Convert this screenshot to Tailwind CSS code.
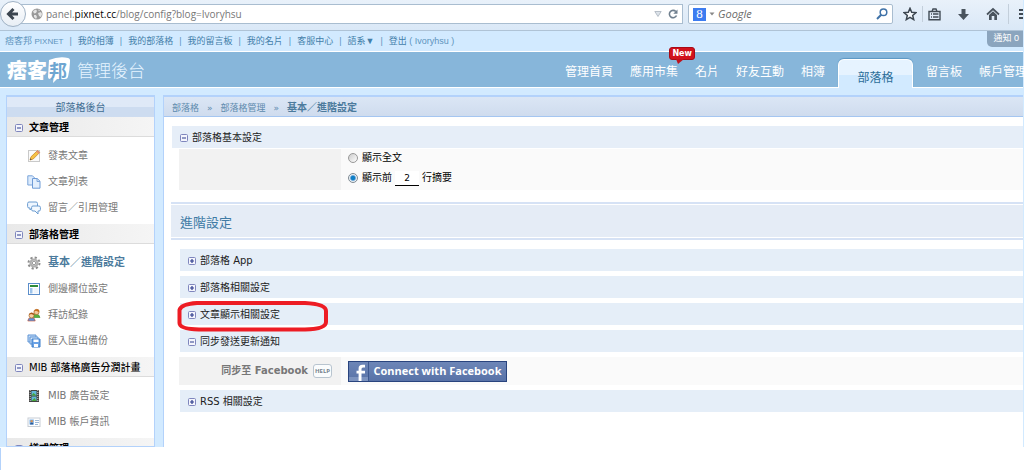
<!DOCTYPE html>
<html lang="zh-Hant">
<head>
<meta charset="utf-8">
<title>部落格管理 - 基本／進階設定</title>
<script src="https://cdn.jsdelivr.net/npm/@tailwindcss/browser@4"></script>
</head>
<body class="bg-white font-['DejaVu_Sans','Noto_Sans_CJK_TC',sans-serif] text-[10px] leading-4 text-[#222]">
<svg class="hidden">
  <symbol id="minus" viewBox="0 0 8 8"><rect x=".5" y=".5" width="7" height="7" rx="1" fill="#f4f5fc" stroke="#7f86bd"/><path d="M2 4h4" stroke="#2c3c8c"/></symbol>
  <symbol id="plus" viewBox="0 0 8 8"><rect x=".5" y=".5" width="7" height="7" rx="1" fill="#f4f5fc" stroke="#7f86bd"/><path d="M2 4h4M4 2v4" stroke="#2c3c8c" stroke-width="1.200"/></symbol>
</svg>
<div class="flex h-[calc(100vh-23px)] flex-col overflow-hidden bg-[#d2eaff] pr-px">

  <!-- Browser toolbar -->
  <div class="flex h-[31px] shrink-0 items-start border-b border-[#afc3d6] bg-linear-to-b from-[#e9f1fa] to-[#dae8f7] pt-1">
    <button aria-label="上一頁" class="relative z-10 -mt-[3px] h-[26px] w-[26px] shrink-0 rounded-full border border-[#9fb1c4] bg-linear-to-b from-white to-[#e8eef5]">
      <svg class="mx-auto h-4 w-4" viewBox="0 0 16 16"><path d="M8.500 3L3.500 8l5 5M4 8h9" fill="none" stroke="#3c4650" stroke-width="3"/></svg>
    </button>
    <div class="-ml-3 flex h-5 min-w-0 flex-1 items-center border border-[#a9bdd0] bg-white pr-1 pl-4">
      <svg class="h-3 w-3 shrink-0" viewBox="0 0 12 12"><circle cx="6" cy="6" r="5.500" fill="#999"/><path d="M2 3l3-1.500 1 1.500-1 2-2 .5zM7 5l3-1 1 2-1 3-2-1zM3 7l2 0 1 2-1 2-2-2zM7 1.500l2 .7-1 1z" fill="#e4e4e4"/></svg>
      <div class="relative ml-[3px] h-[18px] min-w-0 flex-1 font-['Open_Sans',sans-serif] text-[10px] leading-[18px] text-[#777]">
        <input aria-label="網址" class="absolute inset-0 w-full bg-transparent text-transparent outline-none">
        <span>panel.<span class="text-black">pixnet.cc</span>/blog/config?blog=Ivoryhsu</span>
      </div>
      <svg class="h-2 w-2 shrink-0" viewBox="0 0 8 8"><path d="M.8 1.500h6.400L4 6.500z" fill="#dde3ea" stroke="#a8b2bd" stroke-width=".8"/></svg>
      <button aria-label="重新載入" class="ml-1.5"><svg class="h-[10px] w-[10px]" viewBox="0 0 10 10"><path d="M7.800 2.500A3.700 3.700 0 1 0 8.500 6.500" fill="none" stroke="#6f7f8e" stroke-width="1.600"/><path d="M9.500.5v4.200H5.300z" fill="#6f7f8e"/></svg></button>
    </div>
    <div class="ml-[5px] flex h-5 w-[205px] shrink-0 items-center rounded-[2px] border border-[#a9bdd0] bg-white px-1">
      <span class="flex h-[13px] w-[13px] items-center justify-center bg-[#3d7cf0] font-['Liberation_Serif',serif] text-[13px] text-white">8</span>
      <svg class="ml-[3px] h-1 w-[6px]" viewBox="0 0 6 4"><path d="M.5.5h5L3 3.500z" fill="#888"/></svg>
      <input aria-label="搜尋" placeholder="Google" class="ml-[3px] min-w-0 flex-1 bg-transparent font-['Open_Sans',sans-serif] text-[11px] italic outline-none placeholder:text-[#6b6b6b]">
      <button aria-label="搜尋"><svg class="h-3 w-3" viewBox="0 0 12 12"><circle cx="7.500" cy="4.300" r="3.300" fill="none" stroke="#3f72a8" stroke-width="1.500"/><path d="M5.200 6.800L1 11" stroke="#3f72a8" stroke-width="2"/></svg></button>
    </div>
    <div class="flex h-5 shrink-0 items-center pl-[10px]">
      <button aria-label="書籤"><svg class="h-[14px] w-[14px]" viewBox="0 0 14 14"><path d="M7 1.300l1.700 3.900 4.200.4-3.200 2.800 1 4.200L7 10.400l-3.700 2.200 1-4.200L1.100 5.600l4.200-.4z" fill="#f4f8fc" stroke="#3c4650" stroke-width="1.500"/></svg></button>
      <span class="mr-[5px] ml-[5px] h-4 w-px bg-[#c3cfdb]"></span>
      <button aria-label="書籤清單"><svg class="h-[13px] w-[13px]" viewBox="0 0 13 13"><path d="M1 3.500h11v8.300H1zM4 3.500L5 1h3l1 2.500M3 6h1M5 6h5.500M3 9h1M5 9h5.500" fill="none" stroke="#414b55" stroke-width="1.400"/></svg></button>
      <button aria-label="下載" class="ml-4"><svg class="h-[13px] w-[13px]" viewBox="0 0 13 13"><path d="M4.500 1h4v5H12L6.500 12 1 6h3.500z" fill="#4a545e"/></svg></button>
      <button aria-label="首頁" class="ml-4"><svg class="h-[14px] w-[14px]" viewBox="0 0 14 14"><path d="M1 7.500L7 2l6 5.500" fill="none" stroke="#4a545e" stroke-width="1.700"/><path d="M3 8l4-3.700L11 8v5H8.300V9H5.700v4H3z" fill="#4a545e"/></svg></button>
      <span class="ml-2 h-5 w-px bg-[#c3cfdb]"></span>
      <button aria-label="選單" class="ml-2.5 w-1 overflow-hidden"><svg class="h-3 w-3" viewBox="0 0 12 12"><path d="M0 2h12M0 6h12M0 10h12" stroke="#414b55" stroke-width="2"/></svg></button>
    </div>
  </div>

  <!-- Account links -->
  <div class="flex h-[20px] shrink-0 items-start justify-between">
    <nav class="flex gap-[6px] pt-0.5 pl-[5px] font-['Liberation_Sans','Noto_Sans_CJK_TC',sans-serif] text-[9px] whitespace-nowrap text-[#5d94bd]">
      <a href="#">痞客邦 <span class="text-[8px]">PIXNET</span></a><span>|</span><a href="#" class="text-[#4480aa]">我的相簿</a><span>|</span><a href="#" class="text-[#4480aa]">我的部落格</a><span>|</span><a href="#" class="text-[#4480aa]">我的留言板</a><span>|</span><a href="#" class="text-[#4480aa]">我的名片</a><span>|</span><a href="#" class="text-[#4480aa]">客服中心</a><span>|</span><a href="#" class="text-[#4480aa]">語系▼</a><span>|</span><a href="#"><span class="text-[#4480aa]">登出</span> ( Ivoryhsu )</a>
    </nav>
    <a href="#" class="h-4 rounded-bl-[5px] bg-[#8ba5be] pr-1 pl-1.5 font-['Liberation_Sans','Noto_Sans_CJK_TC',sans-serif] text-[9px] leading-[15px] text-white">通知 0</a>
  </div>

  <!-- Site header -->
  <header class="flex h-[37px] shrink-0 items-stretch border-y border-white bg-[#87b6da] pl-[7px]">
    <a href="#" class="flex items-center" aria-label="痞客邦管理後台">
      <span class="flex items-center font-['Noto_Sans_CJK_TC',sans-serif] text-[20px] leading-[26px] font-black text-white">痞客<span class="relative w-[24px] pl-0.5 text-[18px] font-bold text-[#6ea6d1]"><svg class="absolute -top-px left-0 h-7 w-6" viewBox="0 0 24 28"><path d="M2 4Q12 0 21 2q2.500.5 2 4-.3 8-2 15-.5 2-3 2h-8l-4 4 .5-4H3q-2 0-2-2z" fill="#fff"/></svg><span class="relative">邦</span></span></span>
      <span class="ml-[6px] font-['Noto_Sans_CJK_TC',sans-serif] text-[17px] leading-6 font-light text-[#e6f4ff]">管理後台</span>
    </a>
    <nav class="-mr-1 ml-auto flex gap-px font-['Noto_Sans_CJK_TC',sans-serif] text-[12px] leading-[38px] whitespace-nowrap text-white">
      <a href="#" class="px-2">管理首頁</a>
      <a href="#" class="relative px-2">應用市集<span class="absolute -top-[5px] right-0 -mr-[9px] h-[13px] rounded-[3px] border border-[#a80a16] bg-[#d1121d] px-0.5 font-['DejaVu_Sans',sans-serif] text-[8px] leading-[11px] font-bold">New<svg class="absolute top-[11px] left-1.5 h-1.5 w-2" viewBox="0 0 8 6"><path d="M0 0h8L2 5z" fill="#c0101a"/></svg></span></a>
      <a href="#" class="px-2">名片</a>
      <a href="#" class="px-2">好友互動</a>
      <a href="#" class="px-2">相簿</a>
      <a href="#" aria-current="page" class="mt-[7px] ml-1 -mb-px w-[75px] rounded-t-md border border-b-0 border-white bg-linear-to-b from-[#e6f3ff] from-55% to-[#d2eaff] to-55% text-center leading-[34px] text-[#2c6e98] shadow-[0_-1px_1px_#5d97c4]">部落格</a>
      <a href="#" class="ml-1 px-2">留言板</a>
      <a href="#" class="pl-2">帳戶管理</a>
    </nav>
  </header>

  <div class="flex min-h-0 flex-1 gap-2 pt-[7px] pl-[6px]">

    <!-- Sidebar -->
    <aside class="w-[149px] shrink-0 overflow-hidden border border-t-2 border-[#b3d2fb] bg-white">
      <h2 class="h-5 bg-linear-to-b from-[#dfe9f7] from-50% to-[#cddcf0] to-50% text-center leading-[22px] text-[#3f6d92]">部落格後台</h2>
      <section>
        <h3><button class="flex h-5 w-full items-center gap-1.5 border-b border-[#dcdcdc] bg-linear-to-r from-[#e9e9e9] to-[#f5f5f5] pt-0.5 pl-2 font-bold text-black"><svg class="h-2 w-2"><use href="#minus"/></svg><span>文章管理</span></button></h3>
        <ul class="pt-[6px] pb-[3px] pl-5 text-[#777]">
          <li><a href="#" class="flex h-[26px] items-center gap-[7px]"><svg class="h-[14px] w-[14px]" viewBox="0 0 14 14"><rect x="1.500" y="1.500" width="11" height="11" fill="#fafafa" stroke="#c9c9c9"/><path d="M3 11l1-3.200L10.500 1.500l2.200 2L6.200 10z" fill="#f6c244" stroke="#c98a2a" stroke-width=".8"/><path d="M10.500 1.500l2.200 2-1.200 1.200-2.200-2z" fill="#e58c7d"/><path d="M3 11l.5-1.700 1.200 1.200z" fill="#444"/></svg>發表文章</a></li>
          <li><a href="#" class="flex h-[26px] items-center gap-[7px]"><svg class="h-[14px] w-[14px]" viewBox="0 0 14 14"><path d="M.8.8h4.700l2.200 2.200v7H.8z" fill="#dcebfd" stroke="#7ba4d9"/><path d="M5.500 3.500h4.700l2.800 2.700v7H5.500z" fill="#e3effd" stroke="#6f9bd6"/><path d="M10 3.500v3h3" stroke="#7ba4d9" fill="none"/></svg>文章列表</a></li>
          <li><a href="#" class="flex h-[26px] items-center gap-[7px]"><svg class="h-[14px] w-[14px]" viewBox="0 0 14 14"><path d="M2 1h7q1.500 0 1.500 1.500v3Q10.500 7 9 7H5L3 9V7H2Q.6 7 .6 5.500v-3Q.6 1 2 1z" fill="#eef6ff" stroke="#6b9cd0"/><path d="M6 5h6q1.400 0 1.400 1.400v2.200Q13.400 10 12 10h-1v3l-3-3H6q-1.400 0-1.400-1.400V6.400Q4.600 5 6 5z" fill="#f3f9ff" stroke="#6b9cd0"/></svg>留言／引用管理</a></li>
        </ul>
      </section>
      <section>
        <h3><button class="flex h-5 w-full items-center gap-1.5 border-b border-[#dcdcdc] bg-linear-to-r from-[#e9e9e9] to-[#f5f5f5] pt-0.5 pl-2 font-bold text-black"><svg class="h-2 w-2"><use href="#minus"/></svg><span>部落格管理</span></button></h3>
        <ul class="pt-[6px] pb-[3px] pl-5 text-[#777]">
          <li><a href="#" aria-current="page" class="flex h-[26px] items-center gap-[7px] text-[11px] font-bold text-[#4c7b9d]"><svg class="h-[14px] w-[14px]" viewBox="0 0 14 14"><circle cx="7" cy="7" r="5.500" fill="none" stroke="#8d8d8d" stroke-width="2" stroke-dasharray="2.200 2.120"/><circle cx="7" cy="7" r="3.500" fill="#ddd" stroke="#b0b0b0" stroke-width="2.200"/><circle cx="7" cy="7" r="1.700" fill="#fff" stroke="#888" stroke-width=".8"/></svg>基本／進階設定</a></li>
          <li><a href="#" class="flex h-[26px] items-center gap-[7px]"><svg class="h-[14px] w-[14px]" viewBox="0 0 14 14"><rect x="1.500" y="1.500" width="11" height="11" fill="#fff" stroke="#5b8ecb"/><path d="M3 4h8" stroke="#2f8c39" stroke-width="2"/><path d="M3 6h2.500v5.500H3z" fill="#9dc3ea"/><path d="M6.500 6h5v5.500h-5z" fill="#edf4fc"/></svg>側邊欄位設定</a></li>
          <li><a href="#" class="flex h-[26px] items-center gap-[7px]"><svg class="h-[14px] w-[14px]" viewBox="0 0 14 14"><path d="M5.500 9q.3-3 3.500-3t4 3.500H6z" fill="#55b03e" stroke="#388a2a" stroke-width=".6"/><circle cx="9.500" cy="4" r="2.600" fill="#f4c89a" stroke="#a8641f" stroke-width=".7"/><path d="M7 3.500Q8 .8 10.500 1.300T12 4L9 2.800z" fill="#c56b1c"/><path d="M.8 13q0-3.500 3.700-3.500T8.200 13z" fill="#5b93dd" stroke="#d2542d" stroke-width=".6"/><circle cx="4.500" cy="7.500" r="2.500" fill="#f7cfa5" stroke="#a8641f" stroke-width=".7"/><path d="M2 7Q2.300 4.600 4.800 4.700T7 7L4 6z" fill="#a9561a"/></svg>拜訪紀錄</a></li>
          <li><a href="#" class="flex h-[26px] items-center gap-[7px]"><svg class="h-[14px] w-[14px]" viewBox="0 0 14 14"><path d="M1 1h8v7H1z" fill="#c4dcf8" stroke="#5e94d4"/><path d="M3 3h8v7H3z" fill="#d7e8fb" stroke="#5e94d4"/><path d="M5 5h8v8H5z" fill="#6ba3e6" stroke="#3f80cb"/><path d="M6.500 5.500h5V8h-5zM7 10h4v3H7z" fill="#fff"/></svg>匯入匯出備份</a></li>
        </ul>
      </section>
      <section>
        <h3><button class="flex h-5 w-full items-center gap-1.5 border-b border-[#dcdcdc] bg-linear-to-r from-[#e9e9e9] to-[#f5f5f5] pt-0.5 pl-2 font-medium whitespace-nowrap text-black"><svg class="h-2 w-2"><use href="#minus"/></svg><span>MIB 部落格廣告分潤計畫</span></button></h3>
        <ul class="pt-[6px] pb-[3px] pl-5 text-[#777]">
          <li><a href="#" class="flex h-[26px] items-center gap-[7px]"><svg class="h-[14px] w-[14px]" viewBox="0 0 14 14"><path d="M2 1h10v12H2z" fill="#444"/><path d="M4.500 2h5v4.500h-5zM4.500 7.500h5V12h-5z" fill="#61b7d8"/><path d="M4.500 6.500l2-2.500 3 2.500zM4.500 12l3-3 2 3z" fill="#48a637"/><path d="M3.200 1v12M10.800 1v12" stroke="#ddd" stroke-width=".9" stroke-dasharray="1 1"/></svg>MIB 廣告設定</a></li>
          <li><a href="#" class="flex h-[26px] items-center gap-[7px]"><svg class="h-[14px] w-[14px]" viewBox="0 0 14 14"><rect x="1" y="3" width="12" height="8.500" fill="#fff" stroke="#c8ced6"/><path d="M2.500 4.500h4.300V9.500H2.500z" fill="#77aee6"/><circle cx="4.700" cy="6.300" r="1.200" fill="#d39258"/><path d="M3 9.500q0-2 1.700-2t1.700 2z" fill="#2c5d9c"/><path d="M8 5.500h4M8 7.500h4M8 9.500h3" stroke="#9db9d8"/></svg>MIB 帳戶資訊</a></li>
        </ul>
      </section>
      <section>
        <h3><button class="flex h-5 w-full items-center gap-1.5 border-b border-[#dcdcdc] bg-linear-to-r from-[#e9e9e9] to-[#f5f5f5] pt-0.5 pl-2 font-bold text-black"><svg class="h-2 w-2"><use href="#minus"/></svg><span>樣式管理</span></button></h3>
      </section>
    </aside>

    <!-- Settings -->
    <main class="min-w-0 flex-1 border-t-2 border-l border-[#b3d2fb] bg-white">
      <nav aria-label="路徑" class="flex h-5 items-center gap-2 border-b border-[#a5c6f1] bg-linear-to-b from-[#dbe6f5] to-[#cfdcee] pt-0.5 pl-2 text-[9px] text-[#5d8aad]">
        <a href="#">部落格</a><span>»</span><a href="#">部落格管理</a><span>»</span><strong class="text-[10px] text-[#4c7b9d]">基本／進階設定</strong>
      </nav>

      <section class="pt-[9px] pl-2">
        <h2><button class="flex h-[22px] w-full items-center gap-1 bg-[#e6eef8] pt-0.5 pl-2"><svg class="h-2 w-2"><use href="#minus"/></svg>部落格基本設定</button></h2>
        <div class="mt-px ml-[7px] flex">
          <div class="w-[162px] shrink-0 bg-[#f2f2f2]"></div>
          <div class="flex-1 bg-[#fafafa] pl-[7px] text-black">
            <label class="flex h-[17px] items-center gap-1"><input type="radio" name="show" class="h-[10px] w-[10px] appearance-none rounded-full border border-[#999] bg-linear-to-br from-[#ccc] to-white">顯示全文</label>
            <div class="flex h-6 items-center">
              <input type="radio" id="summary" name="show" checked class="h-[10px] w-[10px] appearance-none rounded-full border border-[#7f8a93] bg-radial from-[#0f7fc6] from-35% to-[#e8f0f5] to-60%">
              <label for="summary" class="ml-1">顯示前</label>
              <input aria-label="行數" value="2" class="mx-[3px] h-[15px] w-6 border-b border-black bg-white text-center text-[9px] outline-none">
              <span>行摘要</span>
            </div>
          </div>
        </div>
      </section>

      <h2 class="mt-3 ml-[7px] border-y-2 border-[#d6e2f5] bg-white py-px text-[13px] text-[#3f7ba5]"><span class="block h-8 bg-[#e5ecf6] pl-[9px] leading-[35px]">進階設定</span></h2>

      <div class="mt-[9px] ml-4 flex flex-col gap-[5px]">
        <button class="flex h-[22px] items-center gap-1 bg-[#e5eef8] pt-0.5 pl-2"><svg class="h-2 w-2"><use href="#plus"/></svg>部落格 App</button>
        <button class="flex h-[22px] items-center gap-1 bg-[#e5eef8] pt-0.5 pl-2"><svg class="h-2 w-2"><use href="#plus"/></svg>部落格相關設定</button>
        <button class="relative flex h-[22px] items-center gap-1 bg-[#e5eef8] pt-0.5 pl-2"><svg class="h-2 w-2"><use href="#plus"/></svg>文章顯示相關設定
          <svg class="absolute -top-[3px] -left-[3px] h-8 w-[152px]" viewBox="0 0 152 32"><path d="M20 3H128Q149 4 149 11V22Q149 29 128 29.500H22Q2.500 29 2.500 23V10Q4 4 20 3Z" fill="none" stroke="#ed1c24" stroke-width="4"/></svg></button>
        <button class="flex h-[22px] items-center gap-1 bg-[#e5eef8] pt-0.5 pl-2"><svg class="h-2 w-2"><use href="#minus"/></svg>同步發送更新通知</button>
        <div class="-ml-px flex h-7">
          <div class="flex w-[162px] shrink-0 items-center justify-end gap-[5px] bg-[#f2f2f2] pr-[9px] text-[10px] font-bold text-[#777]">同步至 Facebook
            <button class="h-[14px] w-[19px] rounded-[3px] border border-[#b8c4cf] bg-[#fafcfd] font-['Open_Sans',sans-serif] text-[6px] leading-3 text-[#76828d]">HELP</button>
          </div>
          <div class="flex flex-1 items-center bg-[#fafafa] pl-[7px]">
            <button class="flex h-[21px] w-[159px] items-stretch border border-[#29447e] bg-linear-to-b from-[#6d86b7] to-[#5872a7] whitespace-nowrap text-white">
              <svg class="h-[19px] w-5 shrink-0" viewBox="0 0 20 19"><path d="M0 15h20v4H0z" fill="#7c93bf"/><path d="M12.500 19v-7.500H16V8.700h-3.500V7q0-1.500 1.500-1.500h2V2.800h-2.600Q9.600 2.800 9.600 6.500v2.200H7.500v2.800h2.100V19z" fill="#fff"/><path d="M19.500 0v19" stroke="#3d588f"/></svg>
              <span class="flex-1 text-center font-['Open_Sans',sans-serif] text-[11px] leading-[18px] font-bold">Connect with Facebook</span>
            </button>
          </div>
        </div>
        <button class="flex h-[22px] items-center gap-1 bg-[#e5eef8] pt-0.5 pl-2"><svg class="h-2 w-2"><use href="#plus"/></svg>RSS 相關設定</button>
      </div>
    </main>
  </div>
</div>
<div class="mt-px h-[22px] border-l border-[#b3d2fb]"></div>
</body>
</html>
